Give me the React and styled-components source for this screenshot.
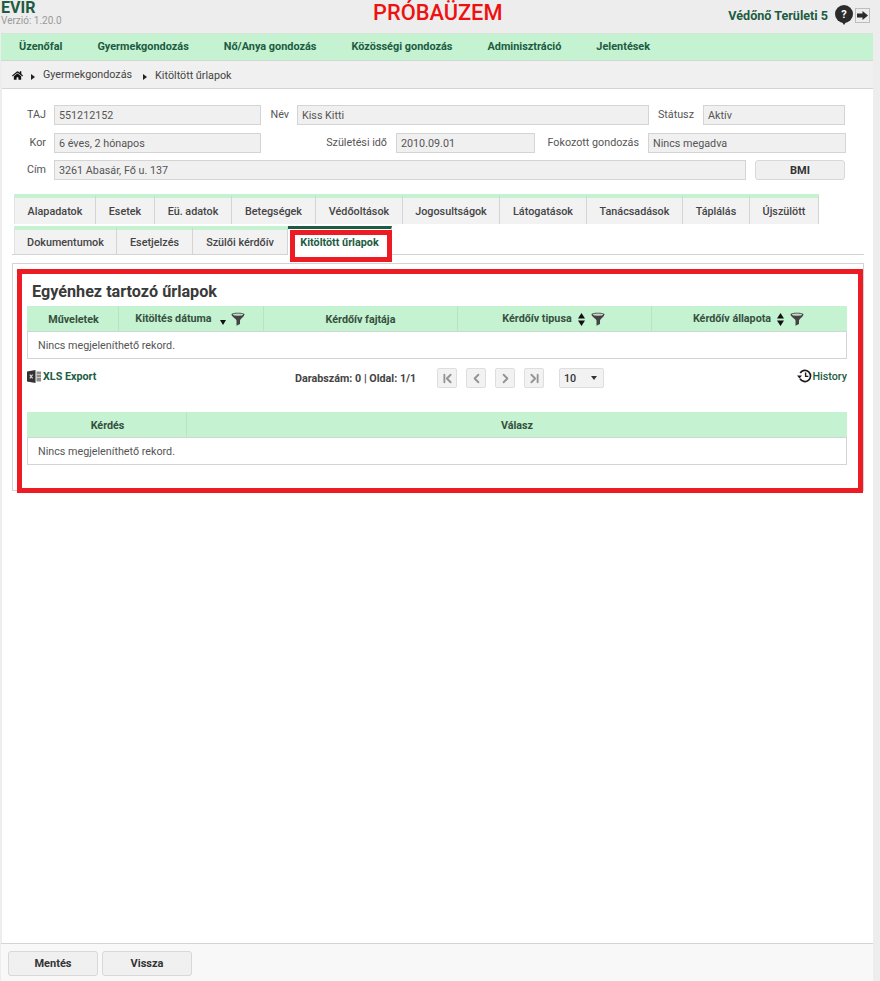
import React from 'react';
import styled, { createGlobalStyle } from 'styled-components';
import { FaHome } from 'react-icons/fa';
import { ChevronFirst, ChevronLast, ChevronLeft, ChevronRight } from 'lucide-react';

const GlobalStyle = createGlobalStyle`
  html, body {
    margin: 0;
    padding: 0;
    background: #ededed;
    font-family: Roboto, "Liberation Sans", sans-serif;
    font-size: 10.75px;
    color: #444;
  }
  * { box-sizing: border-box; }
`;

const Page = styled.div`
  position: relative;
  width: 880px;
  height: 981px;
  overflow: hidden;
  display: flex;
  flex-direction: column;
  background: #ededed;
`;

const Header = styled.header`
  height: 33px;
  display: flex;
  position: relative;
  justify-content: space-between;
`;

const Brand = styled.div`
  padding: 0 0 0 1px;
  h1 {
    margin: 0;
    font-size: 16px;
    line-height: 15px;
    font-weight: 700;
    color: #1d5c42;
  }
  span {
    display: block;
    font-size: 10px;
    line-height: 11px;
    color: #9a9a9a;
  }
`;

const Trial = styled.div`
  position: absolute;
  left: 373px;
  top: 0;
  font-size: 21.8px;
  line-height: 25px;
  font-weight: 500;
  color: #ee1111;
`;

const UserBox = styled.div`
  display: flex;
  align-items: center;
  height: 30px;
  padding-right: 10px;
  font-size: 12.6px;
  font-weight: 700;
  color: #1d5c42;
`;

const HelpIcon = styled.svg`
  width: 18px;
  height: 20px;
  margin-left: 7px;
`;

const LogoutBox = styled.span`
  width: 15px;
  height: 15px;
  margin-left: 2px;
  border: 1px solid #bdbdbd;
  display: flex;
  align-items: center;
  justify-content: center;
`;

const Main = styled.div`
  width: 871px;
  margin-left: 2px;
  height: 948px;
  background: #fff;
  display: flex;
  flex-direction: column;
`;

const Nav = styled.nav`
  height: 28px;
  flex: none;
  margin-left: -1px;
  background: #c5f2d0;
  border-bottom: 1px solid #cfd8d1;
  border-top: 1px solid #d5e5d8;
  display: flex;
  padding-left: 18px;
  gap: 35px;
  align-items: center;
  padding-bottom: 2px;
`;

const NavItem = styled.a`
  font-size: 10.9px;
  font-weight: 700;
  color: #1d5c42;
`;

const Breadcrumb = styled.div`
  height: 28px;
  flex: none;
  background: #f0f0f0;
  border-bottom: 1px solid #d4d4d4;
  display: flex;
  align-items: center;
  padding: 2px 0 0 10px;
  color: #444;
`;

const Arrow = styled.span`
  display: inline-block;
  width: 0;
  height: 0;
  margin: 2px 8px 0 ${p => p.$left}px;
  border-left: 4px solid #222;
  border-top: 3px solid transparent;
  border-bottom: 3px solid transparent;
`;

const CrumbText = styled.span`
  position: relative;
  top: ${p => p.$up || 0}px;
`;

const Form = styled.div`
  padding: 16px 0 0;
  height: 105px;
  flex: none;
  display: flex;
  flex-direction: column;
`;

const FormRow = styled.div`
  display: flex;
  height: ${p => p.$h || 20}px;
  margin-bottom: ${p => p.$mb || 0}px;
`;

const Label = styled.label`
  width: ${p => p.$w}px;
  padding-right: ${p => p.$pad || 8}px;
  text-align: right;
  line-height: 19px;
  color: #555;
  white-space: nowrap;
`;

const Value = styled.div`
  width: ${p => p.$w}px;
  height: ${p => p.$h || 20}px;
  background: #f0f0f0;
  border: 1px solid #d4d4d4;
  padding-left: 4px;
  line-height: 19px;
  color: #555;
  white-space: nowrap;
`;

const BmiButton = styled.button`
  width: 90px;
  height: 20px;
  margin-left: 9px;
  background: #f0f0f0;
  border: 1px solid #d8d8d8;
  border-radius: 3px;
  font: 700 11px Roboto, sans-serif;
  color: #333;
  padding: 0;
`;

const TabsArea = styled.div`
  margin: 0 9px 0 10px;
  height: 61px;
  flex: none;
  border-bottom: 1px solid #d4d4d4;
  display: flex;
  flex-direction: column;
  gap: 2px;
`;

const TabRow = styled.div`
  display: flex;
  padding-left: 3px;
`;

const Tab = styled.a`
  width: ${p => p.$w}px;
  height: ${p => p.$h}px;
  flex: none;
  display: flex;
  align-items: center;
  justify-content: center;
  font-size: 10.8px;
  background: ${p => (p.$active ? '#fff' : '#f2f2f2')};
  border-top: ${p => (p.$active ? '3px solid #1d5c42' : '4px solid #c5f2d0')};
  border-right: 1px solid #d4d4d4;
  color: ${p => (p.$active ? '#1d5c42' : '#444')};
  font-weight: ${p => (p.$active ? 700 : 500)};
  &:first-child { box-shadow: -1px 0 0 #e2e2e2; }
`;

const Panel = styled.section`
  margin: 8px 9px 0 10px;
  width: 852px;
  height: 228px;
  flex: none;
  border: 1px solid #d4d4d4;
  padding: 0 16px 0 14px;
`;

const Title = styled.h2`
  margin: 0;
  padding: 18px 0 0 5px;
  height: 42px;
  font-size: 16.2px;
  line-height: 20px;
  font-weight: 700;
  color: #3a3a3a;
`;

const Table = styled.div`
  border: 1px solid #d4d4d4;
  border-top: 0;
  width: 820px;
`;

const HeadRow = styled.div`
  display: flex;
  height: 26px;
  background: #c5f2d0;
  margin: 0 -1px;
  border-bottom: 1px solid #cdd8d0;
`;

const HeadCell = styled.div`
  width: ${p => p.$w}px;
  flex: ${p => (p.$w ? 'none' : 1)};
  display: flex;
  align-items: center;
  justify-content: center;
  gap: 6px;
  padding-top: 1px;
  padding-right: ${p => (p.$sort ? 2 : 0)}px;
  font-weight: 700;
  color: #35503f;
  border-right: ${p => (p.$last ? 0 : '1px solid #b9e4c4')};
  &:first-child { padding-left: 2px; }
`;

const HeadText = styled.span`
  position: relative;
  top: -1px;
`;

const EmptyRow = styled.div`
  height: 26px;
  padding: 0 0 0 10px;
  display: flex;
  align-items: center;
  color: #555;
`;

const Pager = styled.div`
  height: 53px;
  display: flex;
  position: relative;
  width: 820px;
  padding-top: 7px;
  align-items: flex-start;
`;

const ExportLink = styled.a`
  display: flex;
  align-items: center;
  gap: 2px;
  width: 268px;
  height: 20px;
  font-weight: 700;
  color: #1d5c42;
`;

const Count = styled.div`
  width: 142px;
  font-weight: 700;
  line-height: 22px;
  color: #444;
  position: relative;
  top: 2px;
`;

const PageButton = styled.span`
  width: 20px;
  height: 20px;
  margin-right: 9px;
  background: #f2f2f2;
  border: 1px solid #dedede;
  border-radius: 2px;
  display: flex;
  align-items: center;
  justify-content: center;
  color: #949494;
  position: relative;
  top: 2px;
`;

const PageSize = styled.div`
  width: 45px;
  height: 20px;
  margin-left: 6px;
  padding: 0 4px;
  display: flex;
  justify-content: space-between;
  align-items: center;
  background: #f2f2f2;
  border: 1px solid #dedede;
  border-radius: 2px;
  font-weight: 500;
  color: #333;
  position: relative;
  top: 2px;
`;

const DownTriangle = styled.span`
  width: 0;
  height: 0;
  border-top: 4px solid #333;
  border-left: 3px solid transparent;
  border-right: 3px solid transparent;
  margin-right: 2px;
`;

const HistoryLink = styled.a`
  margin-left: auto;
  display: flex;
  align-items: center;
  height: 20px;
  font-weight: 500;
  color: #1d5c42;
`;

const SortDesc = styled.span`
  width: 0;
  height: 0;
  margin-top: 6px;
  margin-left: 2px;
  margin-right: -1px;
  border-top: 5px solid #111;
  border-left: 3px solid transparent;
  border-right: 3px solid transparent;
`;

const Spacer = styled.div`
  flex: 1;
`;

const Footer = styled.footer`
  height: 38px;
  flex: none;
  margin-left: -1px;
  border-top: 1px solid #d4d4d4;
  background: #f8f8f8;
  display: flex;
  gap: 4px;
  padding: 7px 0 0 7px;
`;

const FooterButton = styled.button`
  width: 90px;
  height: 25px;
  padding: 0;
  background: #f0f0f0;
  border: 1px solid #d8d8d8;
  border-radius: 3px;
  font: 700 11px Roboto, sans-serif;
  color: #333;
`;

const Mark = styled.div`
  position: absolute;
  left: ${p => p.$x}px;
  top: ${p => p.$y}px;
  width: ${p => p.$w}px;
  height: ${p => p.$h}px;
  border: ${p => p.$b}px solid #ed1c24;
  pointer-events: none;
`;

const Funnel = () => (
  <svg width="14" height="14" viewBox="0 0 14 14">
    <path d="M0.5 2.5 C0.5 0.2 13.5 0.2 13.5 2.5 C13 5 9.5 6.5 9 8.5 V12 L5.5 13.8 V8.5 C5 6.5 1 5 0.5 2.5 Z" fill="#444" />
    <ellipse cx="7" cy="2.6" rx="5.2" ry="1.2" fill="#c9d6cc" />
  </svg>
);

const SortBoth = () => (
  <svg width="7" height="13" viewBox="0 0 7 13">
    <path d="M3.5 0 L7 5.5 H0 Z M0 7.5 H7 L3.5 13 Z" fill="#111" />
  </svg>
);

const Help = () => (
  <HelpIcon viewBox="0 0 18 20">
    <circle cx="9" cy="9" r="9" fill="#2b2b2b" />
    <path d="M7 17 L9 20 L11 17 Z" fill="#2b2b2b" />
    <text x="9" y="13" textAnchor="middle" fontSize="11" fontWeight="700" fill="#fff" fontFamily="Roboto">?</text>
  </HelpIcon>
);

const LogoutArrow = () => (
  <svg width="11" height="9" viewBox="0 0 11 9">
    <path d="M0 2.5 H5.5 V0 L11 4.5 L5.5 9 V6.5 H0 Z" fill="#2b2b2b" />
  </svg>
);

const XlsIcon = () => (
  <svg width="14" height="13" viewBox="0 0 14 13">
    <path d="M0 1.5 L8.5 0 V13 L0 11.5 Z" fill="#333" />
    <path d="M9.5 1.5 H14 V11.5 H9.5 Z" fill="#8c8c8c" />
    <path d="M9.5 4.5 H14 M9.5 7.5 H14" stroke="#ddd" strokeWidth="0.8" />
    <path d="M2.8 4.6 L5.6 8.4 M5.6 4.6 L2.8 8.4" stroke="#ddd" strokeWidth="1.1" />
  </svg>
);

const HistoryIcon = () => (
  <svg width="15" height="14" viewBox="0 0 15 14">
    <path d="M3.2 4 A5.6 5.6 0 1 1 3 9.6" fill="none" stroke="#1c1c1c" strokeWidth="1.7" />
    <path d="M0 6.6 H5 L2.5 9.6 Z" fill="#1c1c1c" />
    <path d="M8.6 3.6 V7.4 H11.4" fill="none" stroke="#1c1c1c" strokeWidth="1.4" />
  </svg>
);

const rowOne = [
  ['Alapadatok', 81], ['Esetek', 59], ['Eü. adatok', 77], ['Betegségek', 84], ['Védőoltások', 87],
  ['Jogosultságok', 97], ['Látogatások', 87], ['Tanácsadások', 96], ['Táplálás', 67], ['Újszülött', 69],
];
const rowTwo = [['Dokumentumok', 102], ['Esetjelzés', 76], ['Szülői kérdőív', 95]];
const menu = ['Üzenőfal', 'Gyermekgondozás', 'Nő/Anya gondozás', 'Közösségi gondozás', 'Adminisztráció', 'Jelentések'];

export default function App() {
  return (
    <Page>
      <GlobalStyle />
      <Header>
        <Brand>
          <h1>EVIR</h1>
          <span>Verzió: 1.20.0</span>
        </Brand>
        <Trial>PRÓBAÜZEM</Trial>
        <UserBox>
          Védőnő Területi 5
          <Help />
          <LogoutBox><LogoutArrow /></LogoutBox>
        </UserBox>
      </Header>
      <Main>
        <Nav>
          {menu.map(m => <NavItem key={m}>{m}</NavItem>)}
        </Nav>
        <Breadcrumb>
          <FaHome size={11} color="#111" />
          <Arrow $left={8} />
          <CrumbText $up={-1}>Gyermekgondozás</CrumbText>
          <Arrow $left={11} />
          <CrumbText>Kitöltött űrlapok</CrumbText>
        </Breadcrumb>
        <Form>
          <FormRow $mb={8}>
            <Label $w={52}>TAJ</Label>
            <Value $w={207}>551212152</Value>
            <Label $w={36}>Név</Label>
            <Value $w={352}>Kiss Kitti</Value>
            <Label $w={54} $pad={9}>Státusz</Label>
            <Value $w={142}>Aktív</Value>
          </FormRow>
          <FormRow $mb={7}>
            <Label $w={52}>Kor</Label>
            <Value $w={207}>6 éves, 2 hónapos</Value>
            <Label $w={135} $pad={9}>Születési idő</Label>
            <Value $w={139}>2010.09.01</Value>
            <Label $w={113} $pad={9}>Fokozott gondozás</Label>
            <Value $w={198}>Nincs megadva</Value>
          </FormRow>
          <FormRow>
            <Label $w={52}>Cím</Label>
            <Value $w={692}>3261 Abasár, Fő u. 137</Value>
            <BmiButton>BMI</BmiButton>
          </FormRow>
        </Form>
        <TabsArea>
          <TabRow>
            {rowOne.map(([t, w]) => <Tab key={t} $w={w} $h={30}>{t}</Tab>)}
          </TabRow>
          <TabRow>
            {rowTwo.map(([t, w]) => <Tab key={t} $w={w} $h={28}>{t}</Tab>)}
            <Tab $w={104} $h={29} $active>Kitöltött űrlapok</Tab>
          </TabRow>
        </TabsArea>
        <Panel>
          <Title>Egyénhez tartozó űrlapok</Title>
          <Table>
            <HeadRow>
              <HeadCell $w={92}>Műveletek</HeadCell>
              <HeadCell $w={145} $sort>
                <HeadText>Kitöltés dátuma</HeadText>
                <SortDesc />
                <Funnel />
              </HeadCell>
              <HeadCell $w={194}>Kérdőív fajtája</HeadCell>
              <HeadCell $w={194} $sort>
                <HeadText>Kérdőív tipusa</HeadText>
                <SortBoth />
                <Funnel />
              </HeadCell>
              <HeadCell $last $sort>
                <HeadText>Kérdőív állapota</HeadText>
                <SortBoth />
                <Funnel />
              </HeadCell>
            </HeadRow>
            <EmptyRow>Nincs megjeleníthető rekord.</EmptyRow>
          </Table>
          <Pager>
            <ExportLink><XlsIcon />XLS Export</ExportLink>
            <Count>Darabszám: 0 | Oldal: 1/1</Count>
            <PageButton><ChevronFirst size={15} strokeWidth={3} /></PageButton>
            <PageButton><ChevronLeft size={15} strokeWidth={3} /></PageButton>
            <PageButton><ChevronRight size={15} strokeWidth={3} /></PageButton>
            <PageButton><ChevronLast size={15} strokeWidth={3} /></PageButton>
            <PageSize>10<DownTriangle /></PageSize>
            <HistoryLink><HistoryIcon />History</HistoryLink>
          </Pager>
          <Table>
            <HeadRow>
              <HeadCell $w={160}>Kérdés</HeadCell>
              <HeadCell $last>Válasz</HeadCell>
            </HeadRow>
            <EmptyRow>Nincs megjeleníthető rekord.</EmptyRow>
          </Table>
        </Panel>
        <Spacer />
        <Footer>
          <FooterButton>Mentés</FooterButton>
          <FooterButton>Vissza</FooterButton>
        </Footer>
      </Main>
      <Mark $x={290} $y={230} $w={102} $h={32} $b={5} />
      <Mark $x={17} $y={269} $w={846} $h={224} $b={5} />
    </Page>
  );
}
